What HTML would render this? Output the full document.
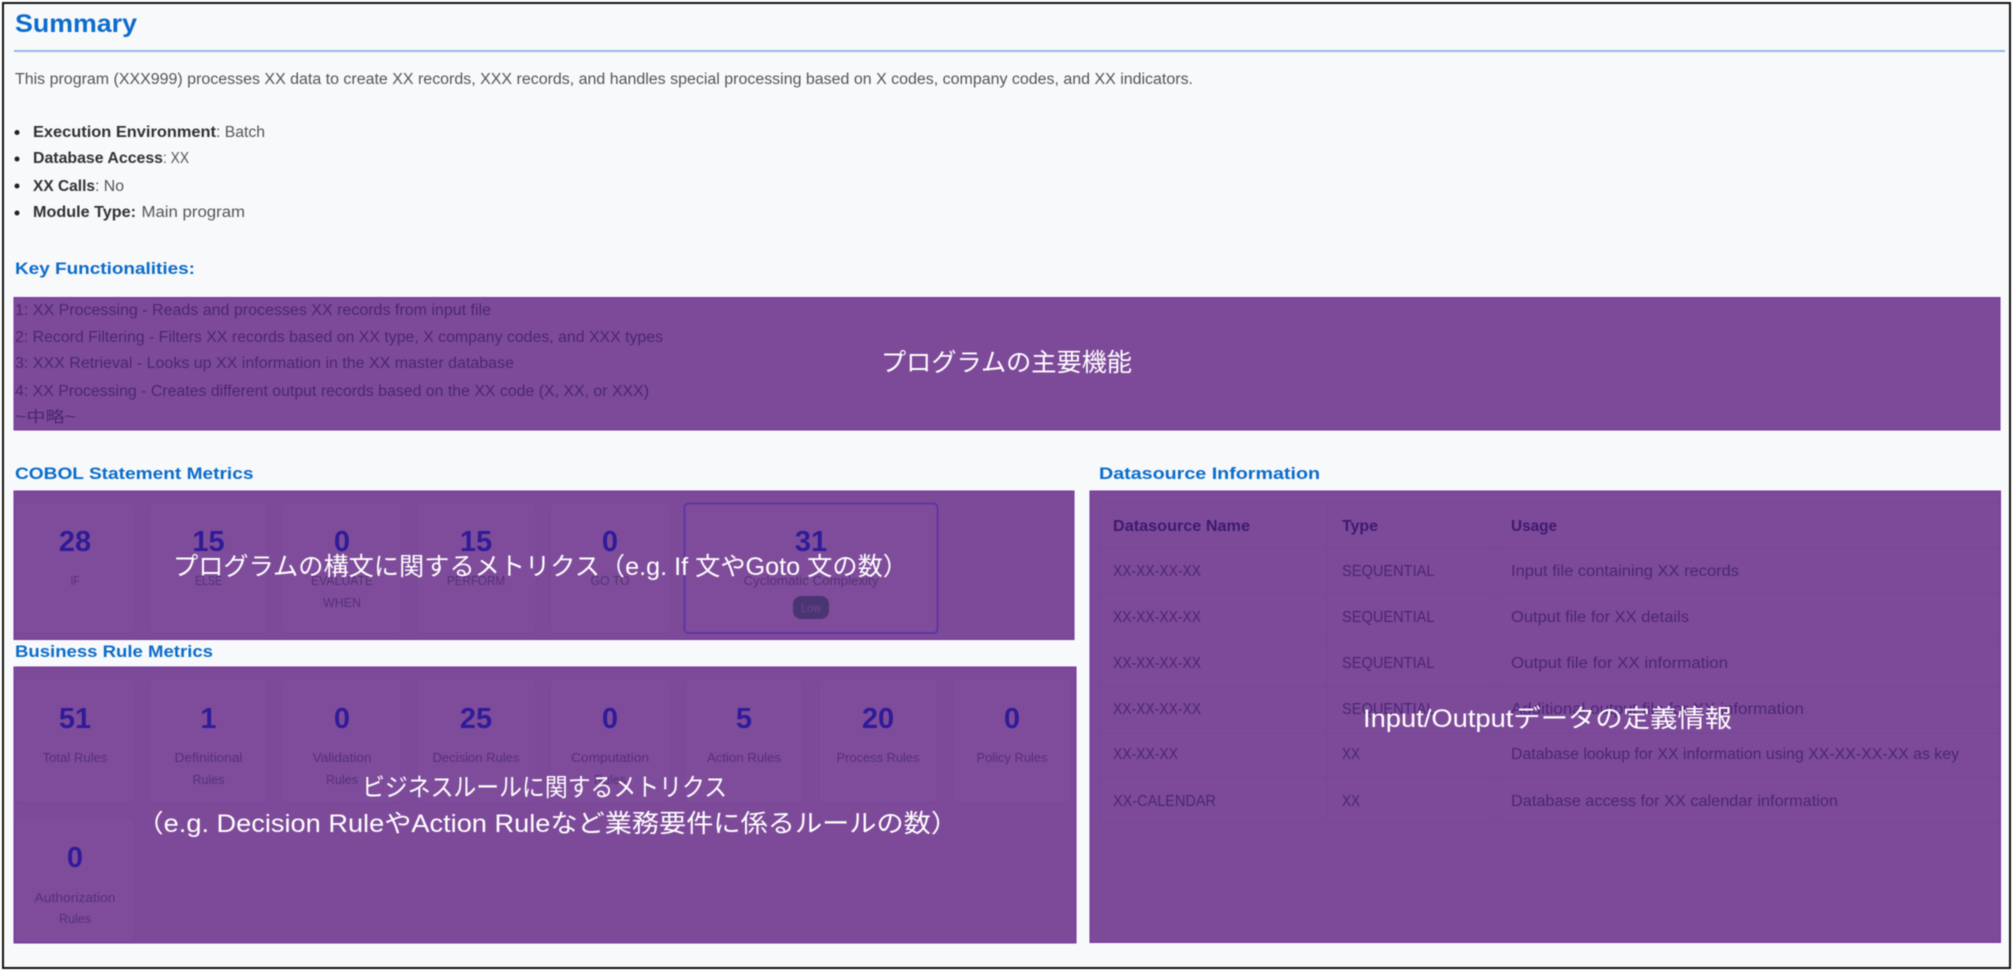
<!DOCTYPE html>
<html lang="en"><head><meta charset="utf-8"><title>Summary</title>
<style>
html,body{margin:0;padding:0;background:#f8f9fb;width:2013px;height:971px;overflow:hidden}
svg{display:block;filter:blur(.5px)}
text{font-family:"Liberation Sans","Noto Sans CJK JP",sans-serif;white-space:pre}
.h{font-weight:700;fill:#0b6ccb}
.p{font-size:15.5px;fill:#555}
.b{font-size:15.5px;font-weight:700;fill:#2f3136}
.k{font-size:15.5px;fill:#4a2772}
.n{font-size:29px;font-weight:700;fill:#2f1b98;text-anchor:middle}
.l{font-size:13px;fill:#553078}
.c{fill:#7f4c9b;stroke:#784799;stroke-width:1}
.th{font-size:15.5px;font-weight:700;fill:#3d1a70}
.td{font-size:15.5px;fill:#4a2676}
.o{font-size:25px;fill:#fff}
.box{fill:#7d4a99;stroke:#7436a0;stroke-width:1}
.ln{stroke:#784799;stroke-width:1}
</style></head><body>
<svg xmlns="http://www.w3.org/2000/svg" width="2013" height="971" viewBox="0 0 2013 971">
<rect width="2013" height="971" fill="#fff"/>
<rect x="3" y="3" width="2007" height="965" fill="#f8f9fb" stroke="#111" stroke-width="2"/>

<text class="h" x="15" y="32" font-size="25" textLength="122" lengthAdjust="spacingAndGlyphs">Summary</text>
<rect x="14" y="50" width="1991" height="2" fill="#8fb8ea"/>
<text class="p" x="15" y="84" textLength="1178" lengthAdjust="spacingAndGlyphs">This program (XXX999) processes XX data to create XX records, XXX records, and handles special processing based on X codes, company codes, and XX indicators.</text>

<circle cx="17" cy="132.500" r="2.500" fill="#222"/>
<circle cx="17" cy="159" r="2.500" fill="#222"/>
<circle cx="17" cy="186" r="2.500" fill="#222"/>
<circle cx="17" cy="213" r="2.500" fill="#222"/>
<text class="b" x="33" y="137" textLength="183" lengthAdjust="spacingAndGlyphs">Execution Environment</text>
<text class="p" x="216" y="137" textLength="49" lengthAdjust="spacingAndGlyphs">: Batch</text>
<text class="b" x="33" y="163" textLength="130" lengthAdjust="spacingAndGlyphs">Database Access</text>
<text class="p" x="163" y="163" textLength="26" lengthAdjust="spacingAndGlyphs">: XX</text>
<text class="b" x="33" y="191" textLength="62" lengthAdjust="spacingAndGlyphs">XX Calls</text>
<text class="p" x="95" y="191" textLength="29" lengthAdjust="spacingAndGlyphs">: No</text>
<text class="b" x="33" y="217" textLength="103" lengthAdjust="spacingAndGlyphs">Module Type:</text>
<text class="p" x="141.500" y="217" textLength="103.500" lengthAdjust="spacingAndGlyphs">Main program</text>

<text class="h" x="15" y="274" font-size="17" textLength="180" lengthAdjust="spacingAndGlyphs">Key Functionalities:</text>

<!-- Key functionalities box -->
<rect class="box" x="14" y="297.500" width="1986" height="132.500"/>
<text class="k" x="15" y="315" textLength="476" lengthAdjust="spacingAndGlyphs">1: XX Processing - Reads and processes XX records from input file</text>
<text class="k" x="15" y="342" textLength="648" lengthAdjust="spacingAndGlyphs">2: Record Filtering - Filters XX records based on XX type, X company codes, and XXX types</text>
<text class="k" x="15" y="368" textLength="499" lengthAdjust="spacingAndGlyphs">3: XXX Retrieval - Looks up XX information in the XX master database</text>
<text class="k" x="15" y="396" textLength="634" lengthAdjust="spacingAndGlyphs">4: XX Processing - Creates different output records based on the XX code (X, XX, or XXX)</text>
<text class="k" x="15" y="422" textLength="61" lengthAdjust="spacingAndGlyphs">~中略~</text>
<text class="o" x="881" y="371" textLength="251" lengthAdjust="spacingAndGlyphs">プログラムの主要機能</text>

<!-- COBOL -->
<text class="h" x="15" y="479" font-size="16.500" textLength="238.500" lengthAdjust="spacingAndGlyphs">COBOL Statement Metrics</text>
<rect class="box" x="14" y="491" width="1060" height="148.500"/>
<rect class="c" x="15" y="503" width="119" height="130" rx="4"/>
<rect class="c" x="149" y="503" width="119" height="130" rx="4"/>
<rect class="c" x="282" y="503" width="119" height="130" rx="4"/>
<rect class="c" x="417" y="503" width="119" height="130" rx="4"/>
<rect class="c" x="550" y="503" width="120" height="130" rx="4"/>
<rect x="684.500" y="503.500" width="253" height="129.500" rx="4" fill="#7f4c9b" stroke="#5a35a2" stroke-width="1.800"/>
<text class="n" x="75" y="551">28</text>
<text class="n" x="208.500" y="551">15</text>
<text class="n" x="342" y="551">0</text>
<text class="n" x="476" y="551">15</text>
<text class="n" x="610" y="551">0</text>
<text class="n" x="811" y="551">31</text>
<text class="l" x="70.500" y="585" textLength="9" lengthAdjust="spacingAndGlyphs">IF</text>
<text class="l" x="195" y="585" textLength="27" lengthAdjust="spacingAndGlyphs">ELSE</text>
<text class="l" x="311" y="585" textLength="62" lengthAdjust="spacingAndGlyphs">EVALUATE</text>
<text class="l" x="323" y="607" textLength="38" lengthAdjust="spacingAndGlyphs">WHEN</text>
<text class="l" x="447" y="585" textLength="58" lengthAdjust="spacingAndGlyphs">PERFORM</text>
<text class="l" x="590.500" y="585" textLength="39" lengthAdjust="spacingAndGlyphs">GO TO</text>
<text class="l" x="743.500" y="585" textLength="135" lengthAdjust="spacingAndGlyphs">Cyclomatic Complexity</text>
<rect x="793" y="596" width="36" height="23" rx="8" fill="#4a3572"/>
<text x="801" y="612" font-size="12" fill="#6c4593" textLength="20" lengthAdjust="spacingAndGlyphs">Low</text>
<text class="o" x="173" y="575" textLength="735" lengthAdjust="spacingAndGlyphs">プログラムの構文に関するメトリクス（e.g. If 文やGoto 文の数）</text>

<!-- Business -->
<text class="h" x="15" y="657" font-size="16.500" textLength="198" lengthAdjust="spacingAndGlyphs">Business Rule Metrics</text>
<rect class="box" x="14" y="667" width="1062" height="276"/>
<rect class="c" x="15" y="679" width="119" height="124" rx="4"/>
<rect class="c" x="149" y="679" width="119" height="124" rx="4"/>
<rect class="c" x="282" y="679" width="119" height="124" rx="4"/>
<rect class="c" x="417" y="679" width="119" height="124" rx="4"/>
<rect class="c" x="550" y="679" width="120" height="124" rx="4"/>
<rect class="c" x="685" y="679" width="118" height="124" rx="4"/>
<rect class="c" x="819" y="679" width="118" height="124" rx="4"/>
<rect class="c" x="953" y="679" width="118" height="124" rx="4"/>
<rect class="c" x="15" y="818" width="119" height="124" rx="4"/>
<text class="n" x="75" y="728">51</text>
<text class="n" x="208.500" y="728">1</text>
<text class="n" x="342" y="728">0</text>
<text class="n" x="476" y="728">25</text>
<text class="n" x="610" y="728">0</text>
<text class="n" x="744" y="728">5</text>
<text class="n" x="878" y="728">20</text>
<text class="n" x="1012" y="728">0</text>
<text class="n" x="75" y="867">0</text>
<text class="l" x="42.500" y="762" textLength="65" lengthAdjust="spacingAndGlyphs">Total Rules</text>
<text class="l" x="174.500" y="762" textLength="68" lengthAdjust="spacingAndGlyphs">Definitional</text>
<text class="l" x="192.500" y="784" textLength="32" lengthAdjust="spacingAndGlyphs">Rules</text>
<text class="l" x="312.500" y="762" textLength="59" lengthAdjust="spacingAndGlyphs">Validation</text>
<text class="l" x="326" y="784" textLength="32" lengthAdjust="spacingAndGlyphs">Rules</text>
<text class="l" x="432.500" y="762" textLength="87" lengthAdjust="spacingAndGlyphs">Decision Rules</text>
<text class="l" x="571" y="762" textLength="78" lengthAdjust="spacingAndGlyphs">Computation</text>
<text class="l" x="594" y="784" textLength="32" lengthAdjust="spacingAndGlyphs">Rules</text>
<text class="l" x="707" y="762" textLength="74" lengthAdjust="spacingAndGlyphs">Action Rules</text>
<text class="l" x="836.500" y="762" textLength="83" lengthAdjust="spacingAndGlyphs">Process Rules</text>
<text class="l" x="976.500" y="762" textLength="71" lengthAdjust="spacingAndGlyphs">Policy Rules</text>
<text class="l" x="34.500" y="902" textLength="81" lengthAdjust="spacingAndGlyphs">Authorization</text>
<text class="l" x="59" y="923" textLength="32" lengthAdjust="spacingAndGlyphs">Rules</text>
<text class="o" x="362" y="796" textLength="365" lengthAdjust="spacingAndGlyphs">ビジネスルールに関するメトリクス</text>
<text class="o" x="136.500" y="832" textLength="821.500" lengthAdjust="spacingAndGlyphs">（e.g. Decision RuleやAction Ruleなど業務要件に係るルールの数）</text>

<!-- Datasource -->
<text class="h" x="1099" y="479" font-size="16.500" textLength="221" lengthAdjust="spacingAndGlyphs">Datasource Information</text>
<rect class="box" x="1090" y="491" width="910.500" height="451.500"/>
<g class="ln">
<line x1="1100" y1="503" x2="2000" y2="503"/>
<line x1="1100" y1="548" x2="2000" y2="548"/>
<line x1="1100" y1="594" x2="2000" y2="594"/>
<line x1="1100" y1="640" x2="2000" y2="640"/>
<line x1="1100" y1="687" x2="2000" y2="687"/>
<line x1="1100" y1="733" x2="2000" y2="733"/>
<line x1="1100" y1="777" x2="2000" y2="777"/>
<line x1="1100" y1="822" x2="2000" y2="822"/>
<line x1="1100" y1="503" x2="1100" y2="822"/>
<line x1="1327" y1="503" x2="1327" y2="822"/>
<line x1="1496" y1="503" x2="1496" y2="822"/>
</g>
<text class="th" x="1113" y="531" textLength="137" lengthAdjust="spacingAndGlyphs">Datasource Name</text>
<text class="th" x="1342" y="531" textLength="36" lengthAdjust="spacingAndGlyphs">Type</text>
<text class="th" x="1511" y="531" textLength="46" lengthAdjust="spacingAndGlyphs">Usage</text>

<text class="td" x="1113" y="576" textLength="88" lengthAdjust="spacingAndGlyphs">XX-XX-XX-XX</text>
<text class="td" x="1342" y="576" textLength="92.500" lengthAdjust="spacingAndGlyphs">SEQUENTIAL</text>
<text class="td" x="1511" y="576" textLength="228" lengthAdjust="spacingAndGlyphs">Input file containing XX records</text>

<text class="td" x="1113" y="622" textLength="88" lengthAdjust="spacingAndGlyphs">XX-XX-XX-XX</text>
<text class="td" x="1342" y="622" textLength="92.500" lengthAdjust="spacingAndGlyphs">SEQUENTIAL</text>
<text class="td" x="1511" y="622" textLength="178" lengthAdjust="spacingAndGlyphs">Output file for XX details</text>

<text class="td" x="1113" y="668" textLength="88" lengthAdjust="spacingAndGlyphs">XX-XX-XX-XX</text>
<text class="td" x="1342" y="668" textLength="92.500" lengthAdjust="spacingAndGlyphs">SEQUENTIAL</text>
<text class="td" x="1511" y="668" textLength="217" lengthAdjust="spacingAndGlyphs">Output file for XX information</text>

<text class="td" x="1113" y="714" textLength="88" lengthAdjust="spacingAndGlyphs">XX-XX-XX-XX</text>
<text class="td" x="1342" y="714" textLength="92.500" lengthAdjust="spacingAndGlyphs">SEQUENTIAL</text>
<text class="td" x="1511" y="714" textLength="293" lengthAdjust="spacingAndGlyphs">Additional output file for XX information</text>

<text class="td" x="1113" y="759" textLength="65" lengthAdjust="spacingAndGlyphs">XX-XX-XX</text>
<text class="td" x="1342" y="759" textLength="18" lengthAdjust="spacingAndGlyphs">XX</text>
<text class="td" x="1511" y="759" textLength="448" lengthAdjust="spacingAndGlyphs">Database lookup for XX information using XX-XX-XX-XX as key</text>

<text class="td" x="1113" y="806" textLength="103" lengthAdjust="spacingAndGlyphs">XX-CALENDAR</text>
<text class="td" x="1342" y="806" textLength="18" lengthAdjust="spacingAndGlyphs">XX</text>
<text class="td" x="1511" y="806" textLength="327" lengthAdjust="spacingAndGlyphs">Database access for XX calendar information</text>

<text class="o" x="1363" y="727" textLength="369" lengthAdjust="spacingAndGlyphs">Input/Outputデータの定義情報</text>
</svg>
</body></html>
